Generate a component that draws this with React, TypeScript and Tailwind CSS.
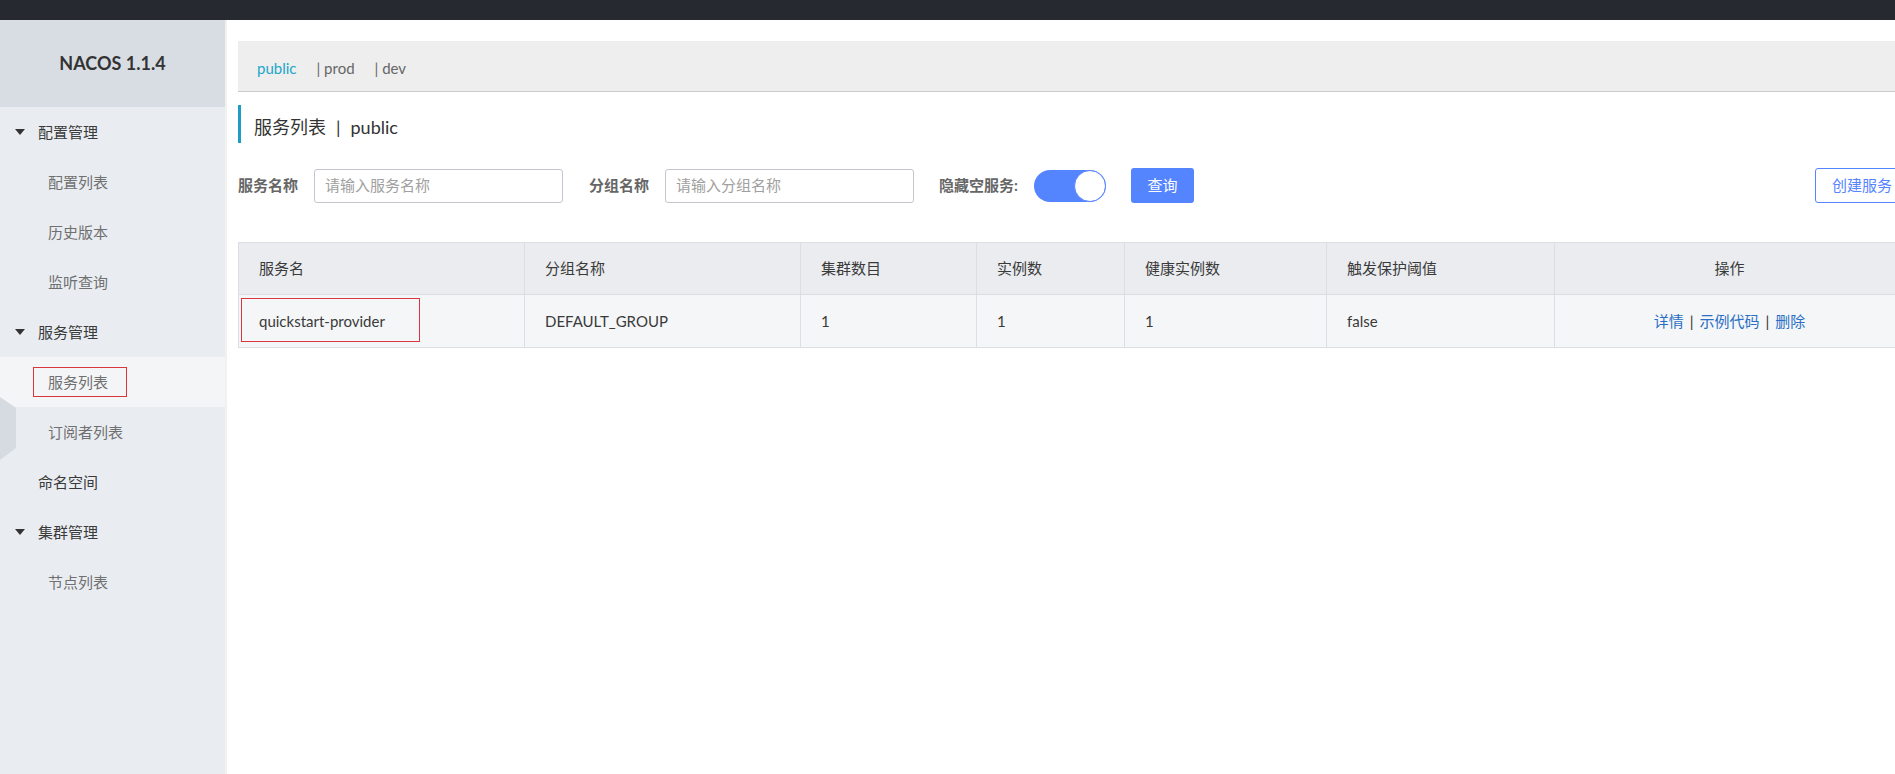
import React from "react";

const font = "font-['Lato','Noto_Sans_CJK_SC',sans-serif]";

function Caret() {
  return (
    <svg width="10" height="6" viewBox="0 0 10 6" className="shrink-0">
      <path d="M0 0 L10 0 L5 6 Z" fill="#333" />
    </svg>
  );
}

function Sidebar() {
  const row = "h-[50px] flex items-center text-[15px]";
  return (
    <div className="relative w-[225px] shrink-0 bg-[#e9edf2] flex flex-col">
      <div className="h-[87px] bg-[#d8dde4] flex items-center justify-center text-[18px] font-bold text-[#333]">
        NACOS 1.1.4
      </div>
      <div className={`${row} pl-[15px] gap-[13px] text-[#3a3a3a]`}>
        <Caret />
        <span>配置管理</span>
      </div>
      <div className={`${row} pl-[48px] text-[#707070]`}>配置列表</div>
      <div className={`${row} pl-[48px] text-[#707070]`}>历史版本</div>
      <div className={`${row} pl-[48px] text-[#707070]`}>监听查询</div>
      <div className={`${row} pl-[15px] gap-[13px] text-[#3a3a3a]`}>
        <Caret />
        <span>服务管理</span>
      </div>
      <div className={`${row} pl-[48px] text-[#707070] bg-[#f4f5f7] relative`}>
        服务列表
        <div className="absolute left-[33px] top-[10px] w-[94px] h-[30px] border border-[#d9363e]" />
      </div>
      <div className={`${row} pl-[48px] text-[#707070]`}>订阅者列表</div>
      <div className={`${row} pl-[38px] text-[#3a3a3a]`}>命名空间</div>
      <div className={`${row} pl-[15px] gap-[13px] text-[#3a3a3a]`}>
        <Caret />
        <span>集群管理</span>
      </div>
      <div className={`${row} pl-[48px] text-[#707070]`}>节点列表</div>
      <svg
        className="absolute left-0 top-[377px]"
        width="16"
        height="63"
        viewBox="0 0 16 63"
      >
        <path d="M0 0 L16 11 L16 51 L0 63 Z" fill="#d6dae1" />
      </svg>
    </div>
  );
}

const cols = "grid grid-cols-[286px_276px_176px_148px_202px_228px_1fr]";

function Table() {
  const head = ["服务名", "分组名称", "集群数目", "实例数", "健康实例数", "触发保护阈值"];
  const data = ["quickstart-provider", "DEFAULT_GROUP", "1", "1", "1", "false"];
  return (
    <div className="border border-[#dcdee3] text-[15px] text-[#3a3a3a]">
      <div className={`${cols} h-[52px] bg-[#eaecf0] border-b border-[#dcdee3]`}>
        {head.map((h) => (
          <div key={h} className="flex items-center pl-[20px] border-r border-[#dcdee3]">
            {h}
          </div>
        ))}
        <div className="flex items-center justify-center">操作</div>
      </div>
      <div className={`${cols} h-[52px] bg-[#f5f6f8]`}>
        {data.map((d, i) => (
          <div key={i} className="relative flex items-center pl-[20px] border-r border-[#dcdee3]">
            {d}
            {i === 0 && (
              <div className="absolute left-[2px] top-[3px] w-[179px] h-[44px] border border-[#d9363e]" />
            )}
          </div>
        ))}
        <div className="flex items-center justify-center gap-[6px]">
          <span className="text-[#2a6fc4]">详情</span>
          <span className="text-[#333]">|</span>
          <span className="text-[#2a6fc4]">示例代码</span>
          <span className="text-[#333]">|</span>
          <span className="text-[#2a6fc4]">删除</span>
        </div>
      </div>
    </div>
  );
}

function Main() {
  return (
    <div className="w-[1693px] shrink-0 bg-white border-l-2 border-[#f1f1f1] pl-[11px] pr-[13px] pt-[21px]">
      <div className="h-[51px] bg-[#eeeeee] border-b border-[#cccccc] flex items-center pl-[19px] pt-[5px] text-[15px] text-[#666]">
        <span className="text-[#21a6ca]">public</span>
        <span className="ml-[20px]">| prod</span>
        <span className="ml-[20px]">| dev</span>
      </div>
      <div className="mt-[13px] h-[38px] border-l-[3px] border-[#1e9cc6] pl-[13px] pt-[6px] flex items-center text-[18px] text-[#333]">
        服务列表<span className="mx-[10px]">|</span>public
      </div>
      <div className="mt-[25px] h-[35px] flex items-center text-[15px]">
        <span className="font-bold text-[#666]">服务名称</span>
        <div className="ml-[16px] w-[249px] h-[34px] border border-[#c4c6cf] rounded-[3px] flex items-center pl-[10px] text-[#a0a0a0]">
          请输入服务名称
        </div>
        <span className="ml-[26px] font-bold text-[#666]">分组名称</span>
        <div className="ml-[16px] w-[249px] h-[34px] border border-[#c4c6cf] rounded-[3px] flex items-center pl-[10px] text-[#a0a0a0]">
          请输入分组名称
        </div>
        <span className="ml-[25px] font-bold text-[#666]">隐藏空服务:</span>
        <div className="ml-[16px] w-[72px] h-[32px] rounded-full bg-[#5584ff] flex items-center justify-end">
          <div className="w-[32px] h-[32px] rounded-full bg-white border border-[#5584ff]" />
        </div>
        <div className="ml-[25px] w-[63px] h-[35px] rounded-[3px] bg-[#5584ff] text-white flex items-center justify-center">
          查询
        </div>
        <div className="ml-auto w-[90px] h-[35px] pl-[16px] rounded-[3px] border border-[#5584ff] text-[#5584ff] bg-white flex items-center">
          创建服务
        </div>
      </div>
      <div className="mt-[39px]">
        <Table />
      </div>
    </div>
  );
}

export default function App() {
  return (
    <div className={`w-[1895px] h-[774px] overflow-hidden flex flex-col ${font}`}>
      <div className="h-[20px] shrink-0 bg-[#262a30]" />
      <div className="flex flex-1 min-h-0">
        <Sidebar />
        <Main />
      </div>
    </div>
  );
}
